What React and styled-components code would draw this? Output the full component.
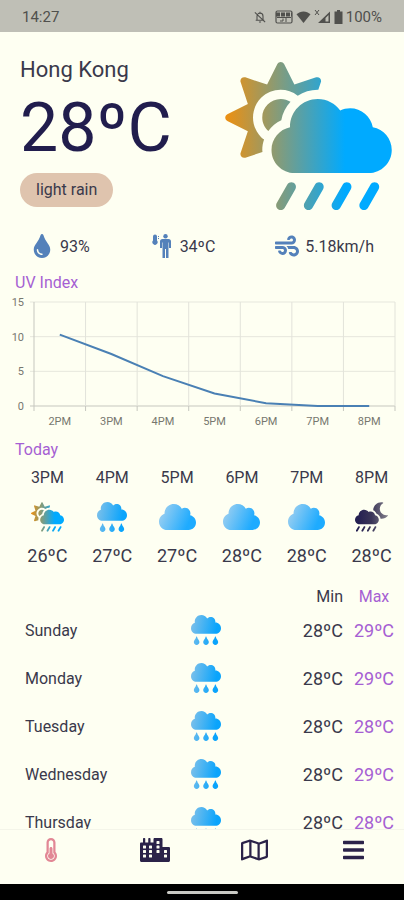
import styled, { createGlobalStyle } from 'styled-components';
import {
	FaBars,
	FaCity,
	FaCloud,
	FaCloudMoonRain,
	FaCloudRain,
	FaCloudSunRain,
	FaRegMap,
	FaThermometerHalf,
	FaTint,
	FaWind,
} from 'react-icons/fa';

const GlobalStyle = createGlobalStyle`
	* {
		box-sizing: border-box;
	}

	body {
		margin: 0;
		background: #fefff2;
		color: #3a394b;
		font-family: Roboto, "Liberation Sans", sans-serif;
		font-size: 16px;
	}
`;

const Screen = styled.div`
	display: flex;
	flex-direction: column;
	height: 100vh;
`;

const StatusBar = styled.header`
	display: flex;
	flex-shrink: 0;
	justify-content: space-between;
	align-items: center;
	height: 32px;
	padding: 2px 22px 0;
	background: #bfbfb6;
	color: #50504d;
	font-size: 15px;
`;

const StatusIcons = styled.div`
	display: flex;
	align-items: center;
	gap: 3px;

	svg:first-child {
		margin-right: 6px;
	}
`;

const Content = styled.main`
	flex: 1;
	min-height: 0;
	overflow-y: auto;
	scrollbar-width: none;
`;

const Hero = styled.section`
	display: flex;
	justify-content: space-between;
	align-items: flex-start;
	padding: 24px 12px 0 20px;
`;

const City = styled.h1`
	margin: 0;
	font-size: 22px;
	font-weight: 400;
	line-height: 28px;
`;

const Temperature = styled.div`
	margin-bottom: 1px;
	color: #211d4d;
	font-size: 68px;
	font-weight: 400;
	line-height: 88px;
`;

const Chip = styled.span`
	display: inline-block;
	padding: 0 16px;
	border-radius: 17px;
	background: #dfc4ae;
	line-height: 34px;
`;

const HeroIcon = styled.div`
	padding-top: 6px;

	svg {
		display: block;
		width: 167px;
		height: 148px;
	}
`;

const Stats = styled.section`
	display: flex;
	justify-content: space-around;
	margin-top: 24px;
`;

const Stat = styled.div`
	display: flex;
	align-items: center;
	gap: 6px;
`;

const IconSlot = styled.span`
	display: flex;
	justify-content: safe center;
	align-items: center;
	width: 24px;
	height: 24px;
	color: ${({ $color }) => $color};

	svg {
		flex-shrink: 0;
		width: ${({ $width }) => $width}px;
		height: 24px;
	}
`;

const SectionTitle = styled.h2`
	margin: ${({ $top }) => $top}px 0 0 15px;
	color: #a65fd3;
	font-size: 16px;
	font-weight: 400;
	line-height: 20px;
`;

const ChartSvg = styled.svg`
	display: block;
	width: 100%;
	height: auto;
	fill: #77776f;
	font-size: 11px;
`;

const Hours = styled.section`
	display: grid;
	grid-template-columns: repeat(6, 1fr);
	margin-top: 8px;
	padding-left: 15px;
`;

const Hour = styled.div`
	display: flex;
	flex-direction: column;
	align-items: center;
	line-height: 20px;
`;

const HourIcon = styled.span`
	display: flex;
	align-items: center;
	height: 58px;

	svg {
		width: ${({ $width }) => $width}px;
		height: 30px;
	}
`;

const Degrees = styled.span`
	font-size: 18px;
`;

const Days = styled.table`
	width: 100%;
	margin-top: 20px;
	border-collapse: collapse;
	table-layout: fixed;

	th,
	td {
		padding: 0;
		font-weight: 400;
	}

	tbody tr {
		height: 48px;
	}

	thead tr {
		height: 20px;
	}
`;

const DayName = styled.th`
	width: 45%;
	text-align: left;

	tbody & {
		padding-left: 25px;
	}
`;

const DayIcon = styled.td`
	width: 48px;
	text-align: center;

	svg {
		display: block;
		width: 30px;
		height: 30px;
		margin: 0 auto;
	}
`;

const Min = styled.td`
	text-align: right;

	&& {
		padding-right: 1px;
	}
`;

const Max = styled.td`
	width: 60px;
	color: #a65fd3;
	text-align: center;
`;

const Nav = styled.nav`
	display: flex;
	flex-shrink: 0;
	height: 55px;
	border-top: 1px solid #f4f5e9;
`;

const NavButton = styled.button`
	display: flex;
	flex: 1;
	justify-content: center;
	align-items: flex-start;
	padding: 8px 0 0;
	border: 0;
	background: none;
	cursor: pointer;
`;

const GestureBar = styled.footer`
	display: flex;
	flex-shrink: 0;
	justify-content: center;
	align-items: center;
	height: 16px;
	background: #000;

	&::after {
		width: 71px;
		height: 3px;
		border-radius: 2px;
		background: #c9c9c4;
		content: '';
	}
`;

const Defs = styled.svg`
	position: absolute;
	width: 0;
	height: 0;
`;

const Gradients = () => (
	<Defs aria-hidden="true">
		<linearGradient id="sunny">
			<stop offset="0" stopColor="#ee9010" />
			<stop offset="0.72" stopColor="#00aaff" />
		</linearGradient>
		<linearGradient id="cloudy" x1="0" y1="0.3" x2="1" y2="0.6">
			<stop offset="0" stopColor="#9fd0f0" />
			<stop offset="0.85" stopColor="#1eabff" />
		</linearGradient>
		<linearGradient id="rainy" x1="0" y1="0.3" x2="1" y2="0.5">
			<stop offset="0" stopColor="#7cc0ea" />
			<stop offset="0.85" stopColor="#0aa4fc" />
		</linearGradient>
		<linearGradient id="night">
			<stop offset="0.1" stopColor="#252052" />
			<stop offset="0.5" stopColor="#3a3558" />
			<stop offset="1" stopColor="#85828c" />
		</linearGradient>
	</Defs>
);

const weather = {
	sunRain: { Icon: FaCloudSunRain, fill: 'url(#sunny)', width: 33 },
	rain: { Icon: FaCloudRain, fill: 'url(#rainy)', width: 30 },
	cloud: { Icon: FaCloud, fill: 'url(#cloudy)', width: 37 },
	moonRain: { Icon: FaCloudMoonRain, fill: 'url(#night)', width: 33 },
};

const WeatherIcon = ({ type }) => {
	const { Icon, fill } = weather[type];
	return <Icon fill={fill} />;
};

const hours = [
	{ time: '3PM', type: 'sunRain', temp: 26 },
	{ time: '4PM', type: 'rain', temp: 27 },
	{ time: '5PM', type: 'cloud', temp: 27 },
	{ time: '6PM', type: 'cloud', temp: 28 },
	{ time: '7PM', type: 'cloud', temp: 28 },
	{ time: '8PM', type: 'moonRain', temp: 28 },
];

const days = [
	{ name: 'Sunday', min: 28, max: 29 },
	{ name: 'Monday', min: 28, max: 29 },
	{ name: 'Tuesday', min: 28, max: 28 },
	{ name: 'Wednesday', min: 28, max: 29 },
	{ name: 'Thursday', min: 28, max: 28 },
];

const uv = [
	{ time: '2PM', value: 10.3 },
	{ time: '3PM', value: 7.5 },
	{ time: '4PM', value: 4.3 },
	{ time: '5PM', value: 1.8 },
	{ time: '6PM', value: 0.4 },
	{ time: '7PM', value: 0 },
	{ time: '8PM', value: 0 },
];

const chart = { left: 34, right: 395, top: 9, bottom: 113 };

const UvChart = () => {
	const step = (chart.right - chart.left) / uv.length;
	const getX = (index) => chart.left + step * index;
	const getY = (value) => chart.bottom - ((chart.bottom - chart.top) * value) / 15;
	const points = uv.map(({ value }, i) => `${getX(i + 0.5)},${getY(value)}`).join(' ');

	return (
		<ChartSvg viewBox="0 0 404 147" role="img" aria-label="UV Index">
			{[0, 5, 10, 15].map((value) => (
				<g key={value}>
					<line
						x1={chart.left - 4}
						x2={chart.right}
						y1={getY(value)}
						y2={getY(value)}
						stroke={value ? '#e6e7dd' : '#c6c7bf'}
					/>
					<text x="24" y={getY(value) + 4} textAnchor="end">
						{value}
					</text>
				</g>
			))}
			{[0, 1, 2, 3, 4, 5, 6, 7].map((i) => (
				<g key={i} stroke={i ? '#e2e3da' : '#c6c7bf'}>
					<line x1={getX(i)} x2={getX(i)} y1={chart.top} y2={chart.bottom} />
					<line
						x1={getX(i)}
						x2={getX(i)}
						y1={chart.bottom}
						y2={chart.bottom + 5}
						stroke="#c6c7bf"
					/>
				</g>
			))}
			{uv.map(({ time }, i) => (
				<text key={time} x={getX(i + 0.5)} y="132" textAnchor="middle">
					{time}
				</text>
			))}
			<polyline points={points} fill="none" stroke="#4a80b4" strokeWidth="2" />
		</ChartSvg>
	);
};

const FeelsLikeIcon = () => (
	<svg viewBox="0 0 20 24" fill="currentColor">
		<path d="M1 2.500a2 2 0 0 1 4 0v4a2.600 2.600 0 1 1-4 0z" />
		<path d="M6 2h1v1H6zM6 4h1v1H6z" />
		<circle cx="13.5" cy="2.2" r="2.2" />
		<path d="M10.500 5h6A2.500 2.500 0 0 1 19 7.500V14h-2V8.500h-.5V24h-2.500v-9h-1v9h-2.500V8.500H10V14H8V7.500A2.500 2.500 0 0 1 10.500 5z" />
	</svg>
);

const BellOffIcon = () => (
	<svg width="12" height="14" viewBox="0 0 14 14" fill="none" stroke="currentColor">
		<path d="M3.500 10.500V6a3.500 3.500 0 0 1 7 0v4.500M2 10.800h10M1 1.500l12 11.500M5.800 12.800h2.400M7 1v1.500" strokeWidth="1.300" />
	</svg>
);

const CalendarIcon = () => (
	<svg width="18" height="14" viewBox="0 0 18 14" fill="none" stroke="currentColor">
		<rect x="1" y="1" width="16" height="12" rx="1.500" strokeWidth="1.200" />
		<path d="M1 4.500h16" strokeWidth="4" strokeDasharray="4 1" />
		<path d="M5 11h3V8.500M11 8v4M2 7.500h14" />
	</svg>
);

const WifiIcon = () => (
	<svg width="15" height="12" viewBox="0 0 15 12" fill="currentColor">
		<path d="M7.500 12L.5 3.300C4.500-.6 10.500-.6 14.500 3.300z" />
	</svg>
);

const SignalIcon = () => (
	<svg width="17" height="16" viewBox="0 0 17 16" fill="currentColor">
		<path d="M1 1l4 5M5 1L1 6" stroke="currentColor" />
		<path d="M4 14L16 2.500V14zM11.500 9v3.500h3V6z" fillRule="evenodd" />
	</svg>
);

const BatteryIcon = () => (
	<svg width="9" height="14" viewBox="0 0 9 14" fill="currentColor">
		<path d="M3 0h3v1.500h2.500V14h-8V1.500H3z" />
	</svg>
);

const navItems = [
	{ label: 'Weather', Icon: FaThermometerHalf, width: 12, color: '#e28795' },
	{ label: 'Cities', Icon: FaCity, width: 30, color: '#2b2349' },
	{ label: 'Map', Icon: FaRegMap, width: 27, color: '#2b2349' },
	{ label: 'Menu', Icon: FaBars, width: 21, color: '#2b2349' },
];

const App = () => (
	<Screen>
		<GlobalStyle />
		<Gradients />
		<StatusBar>
			<span>14:27</span>
			<StatusIcons>
				<BellOffIcon />
				<CalendarIcon />
				<WifiIcon />
				<SignalIcon />
				<BatteryIcon />
				<span>100%</span>
			</StatusIcons>
		</StatusBar>
		<Content>
			<Hero>
				<div>
					<City>Hong Kong</City>
					<Temperature>28ºC</Temperature>
					<Chip>light rain</Chip>
				</div>
				<HeroIcon>
					<WeatherIcon type="sunRain" />
				</HeroIcon>
			</Hero>
			<Stats>
				<Stat>
					<IconSlot $width={18} $color="#5481ba">
						<FaTint />
					</IconSlot>
					93%
				</Stat>
				<Stat>
					<IconSlot $width={20} $color="#5481ba">
						<FeelsLikeIcon />
					</IconSlot>
					34ºC
				</Stat>
				<Stat>
					<IconSlot $width={24} $color="#5481ba">
						<FaWind />
					</IconSlot>
					5.18km/h
				</Stat>
			</Stats>
			<SectionTitle $top={15}>UV Index</SectionTitle>
			<UvChart />
			<SectionTitle $top={0}>Today</SectionTitle>
			<Hours>
				{hours.map(({ time, type, temp }) => (
					<Hour key={time}>
						<span>{time}</span>
						<HourIcon $width={weather[type].width}>
							<WeatherIcon type={type} />
						</HourIcon>
						<Degrees>{temp}ºC</Degrees>
					</Hour>
				))}
			</Hours>
			<Days>
				<thead>
					<tr>
						<DayName as="td" />
						<DayIcon />
						<Min as="th" scope="col">
							Min
						</Min>
						<Max as="th" scope="col">
							Max
						</Max>
					</tr>
				</thead>
				<tbody>
					{days.map(({ name, min, max }) => (
						<tr key={name}>
							<DayName scope="row">{name}</DayName>
							<DayIcon>
								<WeatherIcon type="rain" />
							</DayIcon>
							<Min>
								<Degrees>{min}ºC</Degrees>
							</Min>
							<Max>
								<Degrees>{max}ºC</Degrees>
							</Max>
						</tr>
					))}
				</tbody>
			</Days>
		</Content>
		<Nav>
			{navItems.map(({ label, Icon, width, color }) => (
				<NavButton key={label} type="button" aria-label={label}>
					<IconSlot $width={width} $color={color}>
						<Icon />
					</IconSlot>
				</NavButton>
			))}
		</Nav>
		<GestureBar />
	</Screen>
);

export default App;
